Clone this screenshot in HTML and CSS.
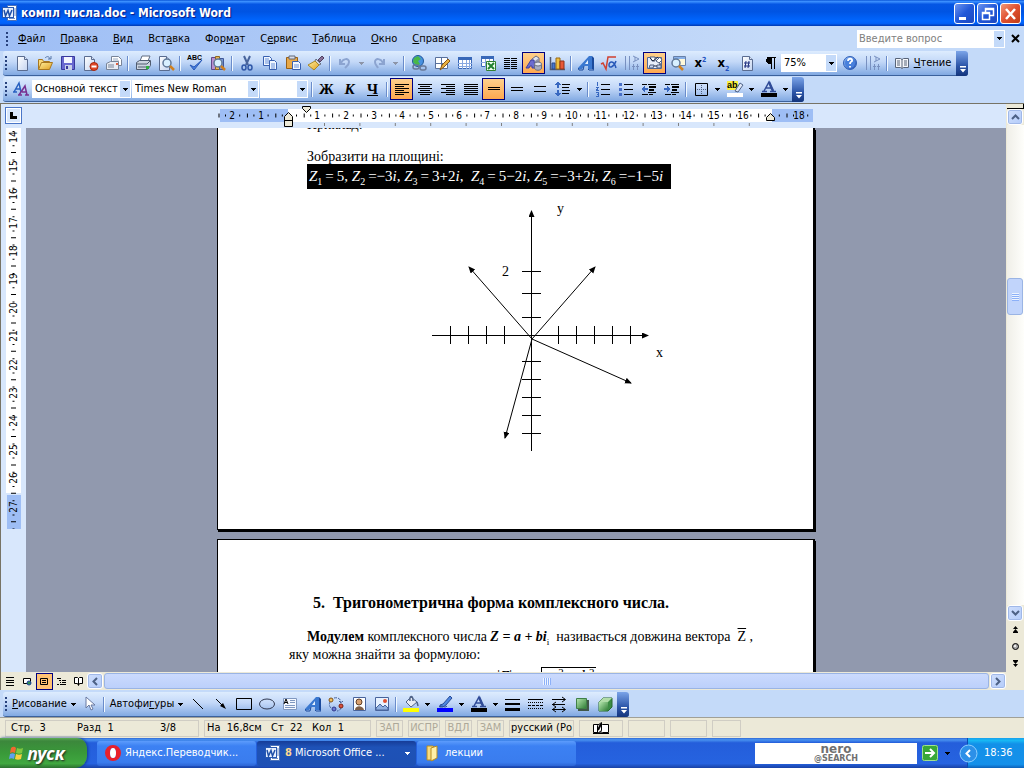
FILE: index.html
```html
<!DOCTYPE html>
<html lang="ru">
<head>
<meta charset="utf-8">
<title>компл числа.doc - Microsoft Word</title>
<link rel="stylesheet" href="styles.css">
</head>
<body>
<svg class="defs" aria-hidden="true">
  <defs>
    <linearGradient id="gBlue" x1="0" y1="0" x2="1" y2="1"><stop offset="0" stop-color="#9cc8ff"/><stop offset="1" stop-color="#1848b0"/></linearGradient>
    <linearGradient id="gGreen" x1="0" y1="0" x2="1" y2="1"><stop offset="0" stop-color="#b8e8b0"/><stop offset="1" stop-color="#2c7c34"/></linearGradient>
    <linearGradient id="gGold" x1="0" y1="0" x2="1" y2="1"><stop offset="0" stop-color="#fff0a0"/><stop offset="1" stop-color="#e0a020"/></linearGradient>
    <linearGradient id="gPaper" x1="0" y1="0" x2="1" y2="1"><stop offset="0" stop-color="#fff"/><stop offset="1" stop-color="#c4d4f0"/></linearGradient>
    <marker id="head" viewBox="0 0 7 7" refX="6" refY="3" markerWidth="7" markerHeight="7" markerUnits="userSpaceOnUse" orient="auto"><path d="M0 0L7 3L0 6Z"/></marker>
    <symbol id="i-page" viewBox="0 0 16 16"><path d="M3.500 1.500h7l3 3v11h-10z" fill="url(#gPaper)" stroke="#5a6c90"/><path d="M10.500 1.500v3h3" fill="#dce6f8" stroke="#5a6c90"/></symbol>
    <symbol id="i-art" viewBox="0 0 16 16"><path d="M0 13L11 1h3v13h-4v-3H6l-2 3H0z" fill="#3a78d0"/><path d="M7 9l3-4v4z" fill="#e8f2ff"/><path d="M14 1l2 2v12l-2-1z" fill="#1a4a9c"/><path d="M0 13l1 2h4l1-4M10 14l1 1h5" fill="none" stroke="#1a4a9c"/></symbol>
    <symbol id="i-down" viewBox="0 0 5 3"><path d="M0 0h5v1H4v1H3v1H2V2H1V1H0z"/></symbol>
    <symbol id="i-word" viewBox="0 0 16 16"><path d="M5.500 .500h9v15h-9z" fill="#fff" stroke="#4a70b8"/><path d="M11 4h3M11 6h3M11 8h3M11 10h3M7 13.500h6" stroke="#7090c8"/><rect x="0.500" y="2.500" width="11" height="10" fill="#e8f0ff" stroke="#2858b0"/><path d="M2 5l1.500 6L6 5.500l1.500 5.500L10 5" fill="none" stroke="#2050a8" stroke-width="1.500"/></symbol>
    <symbol id="i-textdir" viewBox="0 0 16 16"><path d="M1.500 1v14M5.500 1v14M9.500 9v6M13.500 9v6M8 11.500h3M12 11.500h3" fill="none" stroke="#7890c0"/><path d="M9 1l6 3-6 3M11 2v4" fill="none" stroke="#7890c0"/></symbol>
    <symbol id="i-lens" viewBox="0 0 16 16"><circle cx="8" cy="7" r="4" fill="#d8f0ff" stroke="#607898" stroke-width="1.500"/><path d="M11 10l4 4" stroke="#d08020" stroke-width="2.500"/></symbol>
  </defs>
</svg>

<div class="app">
  <header class="titlebar">
    <svg class="ic"><use href="#i-word"/></svg>
    <h1>компл числа.doc - Microsoft Word</h1>
    <div class="winbtns">
      <button aria-label="Свернуть"><svg class="w"><path d="M4 13h7v3H4z" fill="#fff"/></svg></button>
      <button aria-label="Восстановить"><svg class="w"><path d="M7.500 8V4.500h8v7H12M7 5.500h9" fill="none" stroke="#fff" stroke-width="1.500"/><path d="M4.500 8.500h7v7h-7zM4 9.500h8" fill="none" stroke="#fff" stroke-width="1.500"/></svg></button>
      <button class="close" aria-label="Закрыть"><svg class="w"><path d="M5 5l9 10M14 5L5 15" stroke="#fff" stroke-width="2.500"/></svg></button>
    </div>
  </header>

  <nav class="menubar">
    <i class="grip"></i>
    <button><u>Ф</u>айл</button><button><u>П</u>равка</button><button><u>В</u>ид</button><button>Вст<u>а</u>вка</button><button>Фор<u>м</u>ат</button><button>С<u>е</u>рвис</button><button><u>Т</u>аблица</button><button><u>О</u>кно</button><button><u>С</u>правка</button>
    <div class="ask"><input aria-label="Введите вопрос" placeholder="Введите вопрос"><button aria-label="Список вопросов"><svg class="dn"><use href="#i-down"/></svg></button></div>
    <button class="docclose" aria-label="Закрыть документ"><svg width="9" height="9"><path d="M1 1l7 7M8 1L1 8" stroke="#000" stroke-width="2"/></svg></button>
  </nav>

  <div class="barrow">
   <div class="toolbar">
    <i class="grip"></i>
    <button class="tb" aria-label="Создать"><svg class="ic"><use href="#i-page"/></svg></button>
    <button class="tb" aria-label="Открыть"><svg class="ic"><path d="M1.500 14V4.500h4l1 2h6V9" fill="#f8d878" stroke="#a87820"/><path d="M1.500 14.500l3-7h11l-3 7z" fill="url(#gGold)" stroke="#a87820"/><path d="M8 3c2-2 4-2 5 1M11 4h3V1" fill="none" stroke="#5878a8"/></svg></button>
    <button class="tb" aria-label="Сохранить"><svg class="ic"><path d="M1.500 1.500h13v13h-13z" fill="#6868d0" stroke="#38389c"/><path d="M4 2h8v6H4z" fill="#f4f6ff"/><path d="M5 10h7v5H5z" fill="#c8d0e8"/><path d="M6 11h2v3H6z" fill="#38389c"/></svg></button>
    <button class="tb" aria-label="Разрешения"><svg class="ic"><use href="#i-page" x="-2"/><circle cx="11" cy="11.500" r="4" fill="#e04828" stroke="#a82810"/><path d="M8.500 11.500h5" stroke="#fff" stroke-width="2"/></svg></button>
    <button class="tb" aria-label="Сообщение"><svg class="ic"><path d="M5.500 1.500h7l3 3v6h-10z" fill="#fff" stroke="#788498"/><path d="M7 4h5M7 6h6" stroke="#98a8c0"/><path d="M.500 8.500l4-2h8v8H.500z" fill="#e8ecf4" stroke="#788498"/><path d="M2 10h6M2 12h6" stroke="#788498"/><path d="M10 8h2v2h-2z" fill="#e06040"/></svg></button>
    <i class="sep"></i>
    <button class="tb" aria-label="Печать"><svg class="ic"><path d="M5 6l2-5h8l-2 5z" fill="#fff" stroke="#606c80"/><path d="M1.500 7.500l3-2h11v5l-3 4h-11z" fill="#ccd4e0" stroke="#505c70"/><path d="M2 9h10l3-3M3 12h8" fill="none" stroke="#505c70"/><path d="M11 11h3v3h-3z" fill="#30b040"/></svg></button>
    <button class="tb" aria-label="Просмотр"><svg class="ic"><use href="#i-page" x="-2"/><use href="#i-lens" x="1" y="1"/></svg></button>
    <i class="sep"></i>
    <button class="tb" aria-label="Орфография"><svg class="ic"><text x="0" y="5" class="abc">ABC</text><path d="M3 10l4 5 8-10-8 7z" fill="#4a80e0" stroke="#2858b8"/></svg></button>
    <button class="tb" aria-label="Справочные материалы"><svg class="ic"><path d="M1.500 2.500h4v12h-4z" fill="#b890d0" stroke="#604888"/><path d="M5.500 1.500h4v13h-4z" fill="#e8b858" stroke="#906820"/><path d="M9.500 3.500h4v11h-4z" fill="#7898d8" stroke="#405898"/><use href="#i-lens" y="1"/></svg></button>
    <i class="sep"></i>
    <button class="tb" aria-label="Вырезать"><svg class="ic"><path d="M5 1l4 9M11 1L7 10" stroke="#48649c" stroke-width="2"/><ellipse cx="5" cy="12.500" rx="2" ry="2.500" fill="none" stroke="#3058a8" stroke-width="1.500"/><ellipse cx="11" cy="12.500" rx="2" ry="2.500" fill="none" stroke="#3058a8" stroke-width="1.500"/></svg></button>
    <button class="tb" aria-label="Копировать"><svg class="ic"><path d="M1.500 1.500h6l2 2v7h-8z" fill="#f0f6ff" stroke="#3860b0"/><path d="M3 4h4M3 6h4M3 8h4" stroke="#6890d8"/><path d="M7.500 5.500h5l2 2v7h-7z" fill="#f0f6ff" stroke="#3860b0"/><path d="M9 9h4M9 11h4M9 13h4" stroke="#6890d8"/></svg></button>
    <button class="tb" aria-label="Вставить"><svg class="ic"><path d="M1.500 2.500h11v11h-11z" fill="#e8a848" stroke="#986018"/><path d="M4 1h6v3H4z" fill="#d8dce8" stroke="#606878"/><path d="M7.500 6.500h6l2 2v6h-8z" fill="#f4f8ff" stroke="#3860b0"/><path d="M9 10h5M9 12h5" stroke="#6890d8"/></svg></button>
    <button class="tb" aria-label="Формат по образцу"><svg class="ic"><path d="M10 5l4-4 2 2-4 4z" fill="#887098" stroke="#504060"/><path d="M8 4l5 5-2 1-4-4z" fill="#d0d4e0" stroke="#687080"/><path d="M7 6l4 4-5 5-6-5z" fill="url(#gGold)" stroke="#a88828"/></svg></button>
    <i class="sep"></i>
    <button class="tb" aria-label="Отменить"><svg class="ic"><path d="M3 4v5h5M4 8c2-5 8-5 8-1 0 3-2 4-4 6" fill="none" stroke="#8ca4d0" stroke-width="2"/></svg></button><button class="arr" aria-label="Список отмены"><svg class="dn off"><use href="#i-down"/></svg></button>
    <button class="tb" aria-label="Вернуть"><svg class="ic"><path d="M13 4v5H8M12 8C10 3 4 3 4 7c0 3 2 4 3 6" fill="none" stroke="#8ca4d0" stroke-width="2"/></svg></button><button class="arr" aria-label="Список возврата"><svg class="dn off"><use href="#i-down"/></svg></button>
    <i class="sep"></i>
    <button class="tb" aria-label="Гиперссылка"><svg class="ic"><circle cx="7" cy="6" r="5.500" fill="#4890e0" stroke="#205898"/><path d="M3 3l4-2 3 3-3 2 2 3-3 2-4-4z" fill="#48b848"/><rect x="2" y="10" width="6" height="4" rx="2" fill="none" stroke="#687898" stroke-width="1.500"/><rect x="9" y="11" width="6" height="4" rx="2" fill="none" stroke="#687898" stroke-width="1.500"/></svg></button>
    <button class="tb" aria-label="Таблицы и границы"><svg class="ic"><path d="M1.500 2.500h12v11h-12zM7.500 2v12M1 8.500h13" fill="#fff" stroke="#58709c"/><path d="M6 15l2-5 6-6 2 2-6 6z" fill="#e8b040" stroke="#885818"/></svg></button>
    <button class="tb" aria-label="Добавить таблицу"><svg class="ic"><path d="M1.500 2.500h13v11h-13z" fill="#fff" stroke="#3868b8"/><path d="M1 2h14v3H1z" fill="#3868b8"/><path d="M1 8.500h14M1 11.500h14M5.500 5v9M9.500 5v9M12.500 5v9" stroke="#88a8e0"/></svg></button>
    <button class="tb" aria-label="Таблица Excel"><svg class="ic"><path d="M1.500 1.500h12v10h-12z" fill="#fff" stroke="#3868b8"/><path d="M1 1h13v3H1z" fill="#3868b8"/><path d="M1 7.500h13M5.500 4v8M9.500 4v8" stroke="#88a8e0"/><path d="M6.500 6.500h9v9h-9z" fill="#f0fff0" stroke="#308030"/><path d="M8 8l6 6M14 8l-6 6" stroke="#208030" stroke-width="2"/></svg></button>
    <button class="tb" aria-label="Колонки"><svg class="ic crisp"><path d="M1 3h6v1H1zM1 5h6v1H1zM1 7h6v1H1zM1 9h6v1H1zM1 11h6v1H1zM1 13h6v1H1zM8 3h6v1H8zM8 5h6v1H8zM8 7h6v1H8zM8 9h6v1H8zM8 11h6v1H8zM8 13h6v1H8z"/></svg></button>
    <button class="tb on" aria-label="Рисование"><svg class="ic"><path d="M6 4l4-3 3 2v4l-4 3-3-2z" fill="#e0e4f0" stroke="#686c80"/><path d="M9 10V6l4-3v4z" fill="#9094a8"/><path d="M0 13L5 5h3l1 8H6v-2H4l-1 2z" fill="#6c6cd0" stroke="#4040a0"/><path d="M8.500 9v4c0 3 7 3 7 0V9z" fill="#a8acc0" stroke="#686c80"/><ellipse cx="12" cy="9" rx="3.500" ry="2" fill="#e4e6f0" stroke="#686c80"/></svg></button>
    <button class="tb" aria-label="Диаграмма"><svg class="ic"><path d="M1.500 2v12.500H16" fill="none" stroke="#505870" stroke-width="1.500"/><path d="M3 8h3v6H3z" fill="#4878d0" stroke="#284888"/><path d="M7 3h4v11H7z" fill="#f0c040" stroke="#986810"/><path d="M11 6h4v8h-4z" fill="#e85838" stroke="#903018"/></svg></button>
    <i class="sep"></i>
    <button class="tb" aria-label="WordArt"><svg class="ic"><use href="#i-art"/></svg></button>
    <button class="tb" aria-label="Формула"><svg class="ic"><path d="M0 9l2-1 3 6 2-12h8" fill="none" stroke="#d04030" stroke-width="1.500"/><path d="M15 6c-2 6-7 8-7 4s5-5 7 3" fill="none" stroke="#2858b8" stroke-width="1.500"/></svg></button>
    <button class="tb" aria-label="Направление текста"><svg class="ic"><use href="#i-textdir"/></svg></button>
    <button class="tb on" aria-label="Схема"><svg class="ic"><path d="M.500 2.500h14v11H.500z" fill="#e8eefa" stroke="#506898"/><path d="M3 2h5v4H5zM9 6l4-4 2 3-3 3z" fill="#fff" stroke="#506080"/><path d="M3 10h4l-1 3H2zM10 10h4v3h-4z" fill="#c8d4ee" stroke="#506080"/><path d="M3 3l3 3 5-4M13 8v2M7 11h3" fill="none" stroke="#202840"/></svg></button>
    <button class="tb" aria-label="Масштаб области"><svg class="ic"><path d="M3.500 1.500h12v9h-12z" fill="#fff8d8" stroke="#6880a8"/><path d="M4 2h11v2H4z" fill="#88b0e8"/><use href="#i-lens" x="-2" y="1"/></svg></button>
    <button class="tb glyph" aria-label="Надстрочный">x<sup>2</sup></button>
    <button class="tb glyph" aria-label="Подстрочный">x<sub>2</sub></button>
    <button class="tb" aria-label="Номер страницы"><svg class="ic"><use href="#i-page"/><path d="M7 6l-1 7M10 6l-1 7M5 8h6M5 11h6" stroke="#203080"/></svg></button>
    <button class="tb" aria-label="Непечатаемые знаки"><svg class="ic crisp"><path d="M5 2h9v1h-1v11h-1V3h-2v11H9V9H6V8H5V7H4V4h1z"/></svg></button>
    <div class="combo zoom"><select aria-label="Масштаб"><option>75%</option></select><span><svg class="dn"><use href="#i-down"/></svg></span></div>
    <button class="tb" aria-label="Справка"><svg class="ic"><circle cx="8" cy="8" r="6.500" fill="url(#gBlue)" stroke="#3060b8"/><circle cx="8" cy="8" r="5" fill="#4880dc"/><path d="M6 6c0-3 5-3 4 0-1 1-2 1-2 3M8 11v1.500" fill="none" stroke="#fff" stroke-width="1.800"/></svg></button>
    <button class="tb" aria-label="Вертикальный текст"><svg class="ic"><use href="#i-textdir"/></svg></button>
    <i class="sep"></i>
    <button class="label read"><svg class="ic"><path d="M1.500 3.500h5l1.500 1 1.500-1h5v9h-5l-1.500 1-1.500-1h-5z" fill="#f4f6fa" stroke="#586478"/><path d="M8 4v9M3 6h3M3 8h3M3 10h3M10 6h3M10 8h3M10 10h3" stroke="#586478"/></svg><span><u>Ч</u>тение</span></button>
    <button class="cap" aria-label="Параметры панели"><svg width="7" height="7"><path d="M1 0h6v1.500H1zM1 3h6L4 6.500z" fill="#fff"/></svg></button>
   </div>
  </div>

  <div class="barrow format">
   <div class="toolbar">
    <i class="grip"></i>
    <button class="tb" aria-label="Стили и форматирование"><svg class="ic"><path d="M1 11L6 2l2 9M3 8h4M0 11h4" fill="none" stroke="#2860c0" stroke-width="1.500"/><path d="M6 14l6-9 2 9M9 11h4M5 14h4M12 14h4" fill="none" stroke="#783090" stroke-width="1.500"/></svg></button>
    <div class="combo style"><select aria-label="Стиль"><option>Основной текст</option></select><span><svg class="dn"><use href="#i-down"/></svg></span></div>
    <div class="combo font"><select aria-label="Шрифт"><option>Times New Roman</option></select><span><svg class="dn"><use href="#i-down"/></svg></span></div>
    <div class="combo size"><select aria-label="Размер"><option></option></select><span><svg class="dn"><use href="#i-down"/></svg></span></div>
    <i class="sep"></i>
    <button class="tb fmt">Ж</button><button class="tb fmt it">К</button><button class="tb fmt un">Ч</button>
    <i class="sep"></i>
    <button class="tb on" aria-label="По левому краю"><svg class="ic crisp"><path d="M1 3h14v1H1zM1 5h9v1H1zM1 7h14v1H1zM1 9h9v1H1zM1 11h14v1H1zM1 13h9v1H1z"/></svg></button>
    <button class="tb" aria-label="По центру"><svg class="ic crisp"><path d="M1 3h14v1H1zM3 5h10v1H3zM1 7h14v1H1zM3 9h10v1H3zM1 11h14v1H1zM3 13h10v1H3z"/></svg></button>
    <button class="tb" aria-label="По правому краю"><svg class="ic crisp"><path d="M1 3h14v1H1zM6 5h9v1H6zM1 7h14v1H1zM6 9h9v1H6zM1 11h14v1H1zM6 13h9v1H6z"/></svg></button>
    <button class="tb" aria-label="По ширине"><svg class="ic crisp"><path d="M1 3h14v1H1zM1 5h14v1H1zM1 7h14v1H1zM1 9h14v1H1zM1 11h14v1H1zM1 13h14v1H1z"/></svg></button>
    <button class="tb on" aria-label="Интервал одинарный"><svg class="ic crisp"><path d="M2 6h12v1H2zM2 8h12v1H2z"/></svg></button>
    <button class="tb" aria-label="Интервал полуторный"><svg class="ic crisp"><path d="M2 6h12v1H2zM2 9h12v1H2z"/></svg></button>
    <button class="tb" aria-label="Интервал двойной"><svg class="ic crisp"><path d="M2 5h12v1H2zM2 10h12v1H2z"/></svg></button>
    <button class="tb" aria-label="Междустрочный интервал"><svg class="ic crisp"><path d="M3 0l3 4H4v3H2V4H0zM2 9h2v3h2l-3 4-3-4h2z" fill="#3868c0"/><path d="M7 3h8v1H7zM7 6h7v1H7zM7 9h8v1H7zM7 12h7v1H7z"/></svg></button><button class="arr" aria-label="Список интервалов"><svg class="dn"><use href="#i-down"/></svg></button>
    <i class="sep"></i>
    <button class="tb" aria-label="Нумерация"><svg class="ic crisp"><path d="M2 1h1v4H2zM1 6h3v1H3v2h1v1H1V8h1V7H1zM1 11h3v5H1v-1h2v-1H2v-1h1v-1H1z" fill="#3868c0"/><path d="M6 3h9v1H6zM6 8h9v1H6zM6 13h9v1H6z"/></svg></button>
    <button class="tb" aria-label="Маркеры"><svg class="ic"><path d="M1 2h3v3H1zM1 7h3v3H1zM1 12h3v3H1z" fill="#4870c8"/><path d="M6 3.500h9M6 8.500h9M6 13.500h9" stroke="#000"/></svg></button>
    <button class="tb" aria-label="Уменьшить отступ"><svg class="ic crisp"><path d="M0 8l4-3v2h3v2H4v2z" fill="#3868c0"/><path d="M1 3h5v1H1zM7 3h8v1H7zM8 5h7v2H8zM8 8h5v2H8zM7 11h8v1H7zM1 13h6v1H1zM8 13h4v1H8z"/></svg></button>
    <button class="tb" aria-label="Увеличить отступ"><svg class="ic crisp"><path d="M7 8L3 5v2H0v2h3v2z" fill="#3868c0"/><path d="M1 3h5v1H1zM7 3h8v1H7zM8 5h7v2H8zM8 8h5v2H8zM7 11h8v1H7zM1 13h6v1H1zM8 13h4v1H8z"/></svg></button>
    <i class="sep"></i>
    <button class="tb" aria-label="Границы"><svg class="ic"><path d="M2.500 2.500h12v12h-12z" fill="none" stroke="#000"/><path d="M8.500 4v10M4 8.500h10" stroke="#506080" stroke-dasharray="1 1"/></svg></button><button class="arr" aria-label="Виды границ"><svg class="dn"><use href="#i-down"/></svg></button>
    <button class="tb" aria-label="Выделение цветом"><svg class="ic"><path d="M0 0h11v9H0z" fill="#f8f040"/><text x="0" y="7" class="ab">ab</text><path d="M8 10l5-8 3 2-5 7z" fill="#e0e8f8" stroke="#506488"/><path d="M0 12h16v4H0z" fill="#fff"/></svg></button><button class="arr" aria-label="Цвета выделения"><svg class="dn"><use href="#i-down"/></svg></button>
    <button class="tb" aria-label="Цвет шрифта"><svg class="ic"><path d="M3 10L8 1l4 9M5 7h6M1 10.500h5M9 10.500h6" fill="none" stroke="#304c98" stroke-width="1.500"/><path d="M8 1l4 9" stroke="#304c98" stroke-width="2.500"/><path d="M0 12h16v4H0z"/></svg></button><button class="arr" aria-label="Цвета шрифта"><svg class="dn"><use href="#i-down"/></svg></button>
    <button class="cap" aria-label="Параметры форматирования"><svg width="7" height="7"><path d="M1 0h6v1.500H1zM1 3h6L4 6.500z" fill="#fff"/></svg></button>
   </div>
  </div>

  <main class="work">
    <div class="rulerrow">
      <button class="tabsel" aria-label="Позиция табуляции"><svg width="7" height="7"><path d="M0 0h3v4h4v3H0z"/></svg></button>
      <div class="hruler">
        <svg width="598" height="24">
          <rect x="2" y="5" width="68" height="13" fill="#9ebef5"/><rect x="70" y="5" width="484" height="13" fill="#fff"/><rect x="554" y="5" width="41" height="13" fill="#9ebef5"/>
          <path d="M0.500 11.500H590" stroke="#000" stroke-width="4" stroke-dasharray="1 27.400"/>
          <path d="M7 11.500H595" stroke="#000" stroke-width="2" stroke-dasharray="1 13.200"/>
          <g class="rnum"><text x="14" y="15">2</text><text x="43" y="15">1</text><text x="99" y="15">1</text><text x="128" y="15">2</text><text x="156" y="15">3</text><text x="184" y="15">4</text><text x="213" y="15">5</text><text x="241" y="15">6</text><text x="269" y="15">7</text><text x="298" y="15">8</text><text x="326" y="15">9</text><text x="354" y="15">10</text><text x="383" y="15">11</text><text x="411" y="15">12</text><text x="439" y="15">13</text><text x="468" y="15">14</text><text x="496" y="15">15</text><text x="525" y="15">16</text><text x="581" y="15">18</text></g>
          <path d="M106 20.500H550" stroke="#808080" stroke-width="3" stroke-dasharray="1 34.400"/>
          <g fill="#ece9d8" stroke="#000"><path d="M84.500 2.500h8v2l-4 4-4-4z"/><path d="M66.500 22.500v-10l4-4 4 4v10zM66.500 16.500h8"/><path d="M548.500 16.500v-3l4-4 4 4v3z"/></g>
        </svg>
      </div>
    </div>
    <div class="docrow">
      <div class="vruler">
        <svg width="15" height="401">
          <rect width="15" height="365" fill="#fff"/><rect x="1" y="367" width="14" height="34" fill="#9ebef5"/>
          <path d="M7.500 24V401" stroke="#000" stroke-width="5" stroke-dasharray="1 27.400"/>
          <path d="M7.500 3V401" stroke="#000" stroke-width="2" stroke-dasharray="1 13.200"/>
          <g class="rnum"><text transform="translate(11 9) rotate(-90)">14</text><text transform="translate(11 38) rotate(-90)">15</text><text transform="translate(11 66) rotate(-90)">16</text><text transform="translate(11 95) rotate(-90)">17</text><text transform="translate(11 123) rotate(-90)">18</text><text transform="translate(11 151) rotate(-90)">19</text><text transform="translate(11 180) rotate(-90)">20</text><text transform="translate(11 208) rotate(-90)">21</text><text transform="translate(11 237) rotate(-90)">22</text><text transform="translate(11 265) rotate(-90)">23</text><text transform="translate(11 293) rotate(-90)">24</text><text transform="translate(11 322) rotate(-90)">25</text><text transform="translate(11 350) rotate(-90)">26</text><text transform="translate(11 379) rotate(-90)">27</text></g>
        </svg>
      </div>
      <div class="canvas">
        <article class="page first">
          <p class="ex">Приклад:</p>
          <p class="draw">Зобразити на площині:</p>
          <p class="formula"><i>Z</i><sub>1</sub>&thinsp;=&thinsp;5, <i>Z</i><sub>2</sub>&thinsp;=−3<i>i</i>, <i>Z</i><sub>3</sub>&thinsp;=&thinsp;3+2<i>i</i>, &nbsp;<i>Z</i><sub>4</sub>&thinsp;=&thinsp;5−2<i>i</i>, <i>Z</i><sub>5</sub>&thinsp;=−3+2<i>i</i>, <i>Z</i><sub>6</sub>&thinsp;=−1−5<i>i</i></p>
          <svg class="plot" width="260" height="262" role="img" aria-label="Вектори на комплексній площині">
            <g stroke="#000" fill="none">
              <path d="M111.500 253V13" marker-end="url(#head)"/><path d="M12 137.500H228" marker-end="url(#head)"/>
              <path d="M30.500 128v18M48.500 128v18M66.500 128v18M84.500 128v18M138.500 128v18M156.500 128v18M174.500 128v18M192.500 128v18M210.500 128v18M102 73.500h19M102 95.500h19M102 119.500h19M102 163.500h19M102 181.500h19M102 199.500h19M102 217.500h19M102 235.500h19"/>
              <path d="M112 141L49 69" marker-end="url(#head)"/><path d="M112 141L175 69" marker-end="url(#head)"/><path d="M112 141L211 185" marker-end="url(#head)"/><path d="M112 141L85 240" marker-end="url(#head)"/>
            </g>
            <text x="137" y="15">y</text><text x="82" y="78">2</text><text x="236" y="159">x</text>
          </svg>
        </article>
        <article class="page second">
          <h2>5.&nbsp; Тригонометрична форма комплексного числа.</h2>
          <p class="body"><b>Модулем</b> комплексного числа <b><i>Z = a + bi</i></b><sub>і</sub> &nbsp;називається довжина вектора &nbsp;<span class="vec">Z</span> ,<br>яку можна знайти за формулою:</p>
          <p class="modulus">|<i>Z</i>|&nbsp; = &nbsp;&nbsp;<span class="root"><i>a</i><sup>2</sup> + <i>b</i><sup>2</sup></span></p>
        </article>
      </div>
      <div class="vscroll">
        <i class="split"></i>
        <button class="sb" aria-label="Вверх"><svg width="9" height="6"><path d="M1 5l3.500-3.500L8 5" fill="none" stroke="#4d6185" stroke-width="2"/></svg></button>
        <div class="track"><i class="thumb"></i></div>
        <button class="sb" aria-label="Вниз"><svg width="9" height="6"><path d="M1 1l3.500 3.500L8 1" fill="none" stroke="#4d6185" stroke-width="2"/></svg></button>
        <button class="browse" aria-label="Предыдущая страница"><svg width="7" height="8"><path d="M3.500 0L6 3H1zM3.500 3L6 6H1zM1 6h5v1H1z"/></svg></button>
        <button class="browse" aria-label="Выбор объекта"><svg width="7" height="7"><circle cx="3.500" cy="3.500" r="3" fill="#aaa" stroke="#000"/><circle cx="3" cy="3" r="1" fill="#fff"/></svg></button>
        <button class="browse" aria-label="Следующая страница"><svg width="7" height="8"><path d="M1 0h5v1H1zM1 1h5L3.500 4zM1 4h5L3.500 7z"/></svg></button>
      </div>
    </div>
    <div class="hrow">
      <button class="view" aria-label="Обычный"><svg width="9" height="9"><path d="M0 .500h8M0 3.500h8M0 5.500h8M0 8.500h8" stroke="#000"/></svg></button>
      <button class="view" aria-label="Веб-документ"><svg width="9" height="9"><path d="M.500 1.500h7v5h-7z" fill="#fff" stroke="#000"/><circle cx="6" cy="6" r="2" fill="#309050" stroke="#2040a0"/></svg></button>
      <button class="view on" aria-label="Разметка"><svg width="9" height="9"><path d="M.500 1.500h7v6h-7zM2 3.500h4M2 5.500h4" fill="none" stroke="#000"/></svg></button>
      <button class="view" aria-label="Структура"><svg width="9" height="9"><path d="M0 1.500h4M2 3.500h2M5 3.500h4M3 5.500h1M5 5.500h4M0 7.500h2M3 7.500h6" stroke="#000"/></svg></button>
      <button class="view" aria-label="Чтение"><svg width="9" height="9"><path d="M.500.500h3l1 1 1-1h3v6h-3l-1 2-1-2h-3zM4.500 1v7" fill="#fff" stroke="#000"/></svg></button>
      <button class="sb" aria-label="Влево"><svg width="6" height="9"><path d="M5 1L1.500 4.500 5 8" fill="none" stroke="#4d6185" stroke-width="2"/></svg></button>
      <div class="htrack"><i></i></div>
      <button class="sb" aria-label="Вправо"><svg width="6" height="9"><path d="M1 1l3.500 3.500L1 8" fill="none" stroke="#4d6185" stroke-width="2"/></svg></button>
    </div>
  </main>

  <div class="barrow drawrow">
   <div class="toolbar">
    <i class="grip"></i>
    <button class="label draw-menu"><span><u>Р</u>исование</span><svg class="dn"><use href="#i-down"/></svg></button>
    <button class="tb" aria-label="Выбор объектов"><svg class="ic"><path d="M4 1v11l3-3 2 5 2-1-2-4h4z" fill="#fff" stroke="#6878a0"/></svg></button>
    <i class="sep"></i>
    <button class="label shapes"><span>Автофи<u>г</u>уры</span><svg class="dn"><use href="#i-down"/></svg></button>
    <button class="tb" aria-label="Линия"><svg class="ic"><path d="M3 3l10 10" stroke="#000"/></svg></button>
    <button class="tb" aria-label="Стрелка"><svg class="ic"><path d="M3 3l6 6" stroke="#000"/><path d="M7 10l3-3 3 6z"/></svg></button>
    <button class="tb" aria-label="Прямоугольник"><svg class="ic"><path d="M.500 2.500h15v11H.500z" fill="none" stroke="#000"/></svg></button>
    <button class="tb" aria-label="Овал"><svg class="ic"><ellipse cx="8" cy="8" rx="7.500" ry="5" fill="none" stroke="#303850"/></svg></button>
    <button class="tb" aria-label="Надпись"><svg class="ic"><path d="M1.500 2.500h13v11h-13z" fill="#f4f8ff" stroke="#8098c0"/><path d="M2 8l2-5 2 5M3 6.500h2" fill="none" stroke="#000"/><path d="M8 4.500h5M8 6.500h5M3 9.500h10M3 11.500h10" stroke="#8098c0"/></svg></button>
    <button class="tb" aria-label="Добавить WordArt"><svg class="ic"><use href="#i-art"/></svg></button>
    <button class="tb" aria-label="Организационная диаграмма"><svg class="ic"><path d="M6 2c4-1 7 1 7 5M13 12c-1 2-2 3-4 3M3 12c-2-2-2-4-1-6M11 5l2 2 2-2" fill="none" stroke="#48649c" stroke-dasharray="3 1"/><circle cx="3" cy="4" r="2" fill="#f0c060" stroke="#805010"/><circle cx="13" cy="10" r="2" fill="#d85040" stroke="#802010"/><circle cx="6" cy="13" r="2" fill="#6878d8" stroke="#303888"/></svg></button>
    <button class="tb" aria-label="Клип"><svg class="ic"><path d="M2.500 1.500h12v13h-12z" fill="#fff" stroke="#48649c"/><circle cx="8" cy="6" r="3" fill="#d8a070" stroke="#604028"/><path d="M4 14c0-5 8-5 9 0z" fill="#806048"/></svg></button>
    <button class="tb" aria-label="Рисунок"><svg class="ic"><path d="M1.500 1.500h13v13h-13z" fill="#e8f2ff" stroke="#48649c"/><path d="M2 12l4-4 3 3 2-2 3 3v2H2z" fill="#90b0e0" stroke="#48649c"/><circle cx="11" cy="5" r="2" fill="#e05030"/></svg></button>
    <i class="sep"></i>
    <button class="tb" aria-label="Цвет заливки"><svg class="ic"><path d="M3 6l5-5 6 5-6 5z" fill="#e8ecf4" stroke="#506488"/><path d="M7 5c-1-6 3-6 3 0M14 6l1 4" fill="none" stroke="#506488" stroke-width="1.500"/><path d="M0 12h16v4H0z" fill="#ff0"/></svg></button><button class="arr" aria-label="Цвета заливки"><svg class="dn"><use href="#i-down"/></svg></button>
    <button class="tb" aria-label="Цвет линий"><svg class="ic"><path d="M3 9l3-1 7-8 2 2-6 7-3 2H3z" fill="#5088e0" stroke="#284c98"/><path d="M2 11c4-3 5 2 8-1" stroke="#284c98" fill="none"/><path d="M0 12h16v4H0z" fill="#00f"/></svg></button><button class="arr" aria-label="Цвета линий"><svg class="dn"><use href="#i-down"/></svg></button>
    <button class="tb" aria-label="Цвет текста"><svg class="ic"><path d="M3 10L8 1l4 9M5 7h6M1 10.500h5M9 10.500h6" fill="none" stroke="#304c98" stroke-width="1.500"/><path d="M8 1l4 9" stroke="#304c98" stroke-width="2.500"/><path d="M0 12h16v4H0z"/></svg></button><button class="arr" aria-label="Цвета текста"><svg class="dn"><use href="#i-down"/></svg></button>
    <button class="tb" aria-label="Тип линии"><svg class="ic crisp"><path d="M0 3h15v1H0zM0 7h15v2H0zM0 12h15v3H0z"/></svg></button>
    <button class="tb" aria-label="Тип штриха"><svg class="ic"><path d="M0 3.500h15" stroke="#000"/><path d="M0 6.500h15M0 12.500h15" stroke="#000" stroke-dasharray="1 1"/><path d="M0 9.500h15" stroke="#000" stroke-dasharray="3 1"/></svg></button>
    <button class="tb" aria-label="Вид стрелки"><svg class="ic"><path d="M1 3.500h13M1 8.500h13M1 13.500h13M11 1l3.500 2.500L11 6M5 6L1.500 8.500 5 11M11 11l3.500 2.500L11 16M5 11l-3.500 2.500L5 16" fill="none" stroke="#000"/></svg></button>
    <button class="tb" aria-label="Тень"><svg class="ic"><path d="M4 4h11v11H4z" fill="#405848"/><path d="M2.500 2.500h10v10h-10z" fill="url(#gGreen)" stroke="#408048"/></svg></button>
    <button class="tb" aria-label="Объем"><svg class="ic"><path d="M2 6l4-4h9v9l-4 4H2z" fill="#3c8c44" stroke="#286830"/><path d="M2 6h9v9H2z" fill="url(#gGreen)"/><path d="M2 6l4-4h9l-4 4z" fill="#b0dca8"/></svg></button>
    <button class="cap" aria-label="Параметры рисования"><svg width="7" height="7"><path d="M1 0h6v1.500H1zM1 3h6L4 6.500z" fill="#fff"/></svg></button>
   </div>
  </div>

  <footer class="status">
    <div class="cell pg"><span>Стр.&nbsp; 3</span><span>Разд&nbsp; 1</span><span>3/8</span></div>
    <div class="cell pos"><span>На&nbsp; 16,8см</span><span>Ст&nbsp; 22</span><span>Кол&nbsp; 1</span></div>
    <div class="cell c1 off">ЗАП</div><div class="cell c2 off">ИСПР</div><div class="cell c1 off">ВДЛ</div><div class="cell c1 off">ЗАМ</div>
    <div class="cell lang">русский (Ро</div>
    <div class="cell book"><svg width="18" height="13"><path d="M1.500 2.500h6l1.500 1 1.500-1h6v8h-6l-1.500 1-1.500-1h-6z" fill="#fff" stroke="#000"/><path d="M1 11.500h16M9 3v8" stroke="#000"/><path d="M5.500 3.500l4-3v8l-4 3z" fill="#fff" stroke="#000"/><path d="M6 8l3-6" stroke="#000" stroke-width="2"/></svg></div>
    <div class="cell c3"></div><div class="cell c3"></div><div class="cell c4"></div>
  </footer>

  <div class="taskbar">
    <button class="start"><svg width="18" height="18"><path d="M3 4c2-2 4-1 5 0L7 9c-2-1-3-1-5 0z" fill="#f06830"/><path d="M9 4c2 1 4 1 6 0l-1 5c-2 1-4 1-6 0z" fill="#80c840"/><path d="M2 10c2-1 3-1 5 0l-1 5c-2-1-3-1-5 0z" fill="#60a0f0"/><path d="M8 10c2 1 4 1 6 0l-1 5c-2 1-4 1-6 0z" fill="#f8d040"/></svg>пуск</button>
    <div class="tasks">
      <button><svg class="ic"><path fill-rule="evenodd" d="M8 0a8 8 0 1 0 0 16A8 8 0 1 0 8 0zM8 3c2 0 3 2 3 5s-1 5-3 5-3-2-3-5 1-5 3-5z" fill="#e8202c"/><path d="M8 3c2 0 3 2 3 5s-1 5-3 5-3-2-3-5 1-5 3-5z" fill="#fff"/></svg><span>Яндекс.Переводчик...</span></button>
      <button class="active"><svg class="ic"><use href="#i-word"/></svg><span><b>8</b> Microsoft Office ...</span><svg class="dn light"><use href="#i-down"/></svg></button>
      <button><svg class="ic"><path d="M2 1h6l1 1v13H2z" fill="#f8dc80" stroke="#b88c20"/><path d="M6 3l6-2v12l-6 3z" fill="#fff0a8" stroke="#b88c20"/></svg><span>лекции</span></button>
    </div>
    <button class="nero" aria-label="nero @SEARCH"><span class="n1">nero</span><span class="n2">@SEARCH</span></button>
    <button class="go" aria-label="Искать"><svg class="ic"><rect width="16" height="16" rx="2" fill="#38a838"/><rect x=".500" y=".500" width="15" height="15" rx="2" fill="none" stroke="#a0e090"/><path d="M3 8h9M8 4l4 4-4 4" fill="none" stroke="#fff" stroke-width="2"/></svg></button>
    <button class="arr" aria-label="Список поиска"><svg class="dn"><use href="#i-down"/></svg></button>
    <div class="tray"><button aria-label="Показать значки"><svg width="19" height="19"><circle cx="9.500" cy="9.500" r="8.500" fill="#2c90e8" stroke="#90d0ff"/><path d="M11 6L7.500 9.500 11 13" fill="none" stroke="#fff" stroke-width="2"/></svg></button><time>18:36</time></div>
  </div>
</div>
</body>
</html>
```
FILE: styles.css
```css
* { box-sizing: border-box; }
body { margin: 0; font: 11px/14px "DejaVu Sans Condensed", "Noto Sans", sans-serif; color: #000; }
button { border: 0; padding: 0; margin: 0; background: none; font: inherit; color: inherit; white-space: nowrap; }
button, .cell { display: flex; align-items: center; justify-content: center; }
svg { display: block; flex: none; }
p, h1, h2 { margin: 0; }
.defs { position: absolute; width: 0; height: 0; }
.ic { width: 16px; height: 16px; overflow: visible; }
.dn { width: 5px; height: 3px; }
.dn.off { fill: #8d95a8; }
.dn.light { fill: #fff; }
.crisp { shape-rendering: crispEdges; }
.app { height: 100vh; display: flex; flex-direction: column; background: #c4daf9; overflow: hidden; }

.titlebar { flex: none; height: 26px; display: flex; align-items: center; padding: 0 3px 0 2px; gap: 3px; color: #fff;
  background: linear-gradient(#0a56d8 0, #3c90ff 6%, #0556e4 16%, #0054e3 45%, #0066ff 80%, #0060f8 90%, #0038b0 100%); }
.titlebar h1 { flex: 1; font: bold 12px/16px "DejaVu Sans Condensed", "Noto Sans", sans-serif; text-shadow: 1px 1px 1px #0a1883; white-space: nowrap; }
.winbtns { display: flex; gap: 2px; }
.winbtns button { width: 21px; height: 21px; border: 1px solid #fff; border-radius: 3px; background: linear-gradient(135deg, #6c94f0, #2258d8 50%, #1c48c0); }
.winbtns .close { background: linear-gradient(135deg, #f09878, #e05030 50%, #c03c18); }
.w { width: 19px; height: 19px; }

.menubar { flex: none; height: 25px; display: flex; align-items: center; gap: 1px; padding: 0 4px; background: linear-gradient(90deg, #9ebef5, #c4daf9 75%); }
.menubar > button { padding: 0 7px; height: 20px; }
.grip { flex: none; width: 7px; height: 14px; background: repeating-linear-gradient(#27417c 0 2px, transparent 2px 4px) 2px 0 / 2px 14px no-repeat; }
.menubar .grip { width: 6px; }
.menubar .ask { margin-left: auto; display: flex; width: 148px; height: 18px; background: #fff; }
.ask input { flex: 1; min-width: 0; border: 0; padding: 0 2px; background: none; font: inherit; }
.ask input::placeholder { color: #808080; opacity: 1; }
.ask button { width: 12px; background: #c4daf9; border: 1px solid #fff; }
.menubar .docclose { padding: 0 0 0 5px; }

.barrow { flex: none; height: 26px; display: flex; background: #c4daf9; }
.format { height: 25px; }
.toolbar { flex: none; height: 25px; margin-left: 3px; display: flex; align-items: center; border-bottom: 1px solid #3b619c; border-radius: 3px; background: linear-gradient(#ddecfe, #c3d8f8 45%, #81a9e2); }
.format .grip { width: 6px; }
.tb { flex: none; width: 23px; height: 22px; }
.tb.on { border: 1px solid #000080; background: linear-gradient(#fed08c, #ffa850); }
.arr { flex: none; width: 11px; height: 22px; }
.sep { flex: none; width: 6px; height: 15px; background: linear-gradient(90deg, #6a8ccb 50%, #f1f9ff 50%) 2px 0 / 2px 15px no-repeat; }
.label { flex: none; height: 22px; gap: 4px; }
.read { width: 65px; }
.draw-menu { width: 68px; }
.shapes { width: 79px; }
.cap { flex: none; width: 12px; height: 25px; margin-left: 1px; align-items: flex-end; padding-bottom: 3px; border-radius: 0 3px 3px 0; background: linear-gradient(#7ba4e8, #2c55a8 60%, #14357c); }
.abc { font: bold 7px "Liberation Sans", sans-serif; }
.ab { font: bold 9px "Liberation Sans", sans-serif; }
.glyph { display: block; font-weight: bold; font-size: 13px; line-height: 20px; }
.glyph sup, .glyph sub { font-size: 7px; line-height: 0; color: #2050c0; }
.fmt { font: bold 15px/20px "Liberation Serif", serif; }
.it { font-style: italic; }
.un { text-decoration: underline; }
.combo { flex: none; display: grid; height: 18px; margin-right: 1px; background: #fff; }
.combo > * { grid-area: 1 / 1; }
.combo select { appearance: none; width: 100%; border: 0; padding: 0 12px 0 3px; background: none; font: inherit; color: #000; }
.combo span { justify-self: end; width: 12px; display: flex; align-items: center; justify-content: center; pointer-events: none; background: #c4daf9; border: 1px solid #fff; }
.style { width: 99px; }
.font { width: 127px; }
.size { width: 48px; }
.zoom { width: 56px; }

.work { flex: 1; min-height: 0; margin-top: 1px; display: flex; flex-direction: column; border: 1px solid #777365; border-width: 1px 0 0 1px; background: #d8e7fc; }
.rulerrow { flex: none; height: 24px; display: flex; }
.tabsel { width: 17px; height: 17px; margin: 3px 0 0 4px; border: 1px solid #4a76c8; background: #d8e7fc; outline: 1px solid #fff; outline-offset: -2px; }
.hruler { flex: 1; display: flex; justify-content: center; margin: 0 16px 0 4px; }
.docrow { flex: 1; min-height: 0; display: flex; }
.vruler { flex: none; width: 25px; padding-left: 5px; }
.canvas { flex: 1; min-width: 0; background: #9199ae; overflow: hidden; }
.page { display: flow-root; width: 598px; margin: 0 auto; background: #fff; border: 1px solid #000; border-right-width: 2px; box-shadow: 1px 2px #000; font: 14px/18px "Liberation Serif", serif; }
.first { height: 402px; border-top: 0; padding-left: 89px; }
.second { height: 300px; margin-top: 9px; padding: 54px 0 0 71px; }
.ex { margin-top: -12px; line-height: 18px; }
.draw { margin-top: 16px; line-height: 14px; }
.formula { width: fit-content; height: 25px; padding: 0 8px 0 2px; background: #000; color: #fff; font-size: 15px; line-height: 24px; white-space: nowrap; }
.formula sub { font-size: 10px; line-height: 0; }
.plot { margin: 9px 0 0 113px; font-size: 14px; }
.second h2 { padding-left: 24px; font-size: 16px; line-height: 18px; }
.body { margin-top: 16px; text-indent: 18px; white-space: nowrap; }
.body sub { font-size: 9px; line-height: 0; }
.vec { text-decoration: overline; }
.modulus { margin-top: 4px; padding-left: 208px; font-size: 16px; }
.modulus sup { font-size: 11px; line-height: 0; }
.modulus .root { border: solid #000; border-width: 1px 0 0 1px; padding: 0 2px 0 8px; }
.rnum { font: 10px "DejaVu Sans Condensed", "Noto Sans", sans-serif; text-anchor: middle; }

.vscroll { flex: none; width: 18px; margin-top: -24px; display: flex; flex-direction: column; align-items: center; background: #ece9d8; }
.split { width: 17px; height: 5px; border: 1px solid #000; border-width: 0 1px 1px 0; background: #ece9d8; }
.sb { flex: none; width: 16px; height: 16px; border: 1px solid #fff; border-radius: 3px; background: linear-gradient(135deg, #d0dffc, #b4ccfa); box-shadow: 0 0 0 1px #a0b8e8 inset; }
.track { flex: 1; width: 17px; padding-top: 153px; display: flex; flex-direction: column; background: linear-gradient(90deg, #f0efe8, #fefefb); }
.thumb { height: 37px; width: 16px; border: 1px solid #9ab4e4; border-radius: 3px; background: repeating-linear-gradient(#eef4fe 0 1px, #8cb0f8 1px 2px) 4px 14px / 7px 8px no-repeat, #c1d4fb; }
.browse { height: 17px; }
.hrow { flex: none; height: 18px; display: flex; align-items: center; padding: 0 18px 0 1px; background: #ece9d8; }
.view { flex: none; width: 17px; height: 17px; }
.view.on { border: 1px solid #000080; background: #ffc374; }
.htrack { flex: 1; height: 16px; margin: 0 1px; display: flex; align-items: center; justify-content: center; border: 1px solid #9ab4e4; border-radius: 3px; background: linear-gradient(#cbdafd, #bcd0fb); }
.htrack i { width: 8px; height: 7px; background: repeating-linear-gradient(90deg, #eef4fe 0 1px, #8cb0f8 1px 2px); }

.drawrow { height: 28px; padding-top: 2px; border-bottom: 1px solid #a0a098; }
.status { flex: none; height: 20px; display: flex; align-items: center; gap: 5px; padding: 2px 5px; background: #ece9d8; }
.cell { flex: none; height: 17px; border: 1px solid #d0cdc4; white-space: pre; }
.cell.off { color: #aca899; }
.pg { width: 194px; justify-content: flex-start; padding: 0 22px 0 5px; }
.pg span:first-child { width: 66px; }
.pg span:last-child { margin-left: auto; }
.pos { width: 167px; justify-content: space-between; padding: 0 26px 0 2px; }
.c1 { width: 27px; }
.c2 { width: 32px; }
.c3 { width: 37px; }
.c4 { width: 29px; }
.lang { width: 65px; }
.book { width: 44px; }

.taskbar { flex: none; height: 30px; display: flex; align-items: center; color: #fff; background: linear-gradient(#3168d5 0, #4993f0 6%, #245edb 16%, #2663e0 85%, #1941a5 100%); }
.start { width: 87px; height: 30px; padding-right: 14px; gap: 1px; border-radius: 0 10px 12px 0; font: italic bold 18px/24px "Noto Sans", sans-serif; text-shadow: 1px 1px 2px #222; background: linear-gradient(#5eac56 0, #3c873c 10%, #399939 50%, #40a840 85%, #2c7030 100%); box-shadow: 1px 0 3px #103c90; }
.tasks { flex: 1; min-width: 0; display: flex; gap: 1px; padding-left: 10px; align-self: stretch; align-items: center; }
.tasks button { flex: 0 1 159px; min-width: 0; height: 25px; justify-content: flex-start; gap: 4px; padding: 0 6px 0 8px; border-radius: 3px; background: linear-gradient(#5c9cfc, #3c81f3 20%, #3a7cee 85%, #2c64d4); }
.tasks .active { background: linear-gradient(#163c98, #1e52b7 25%, #1e50b4); }
.tasks .dn { margin-left: auto; }
.tasks b { color: #ffd890; }
.nero { width: 162px; height: 21px; margin-right: 5px; flex-direction: column; color: #707070; background: #fff; }
.n1 { font: bold 12px/11px "DejaVu Sans", sans-serif; }
.n2 { font: bold 8px/8px "DejaVu Sans", sans-serif; }
.taskbar > .arr { margin: 0 14px 0 4px; }
.tray { width: 57px; height: 30px; display: flex; align-items: center; gap: 6px; border-left: 1px solid #0a4cb0; background: linear-gradient(#18a0ec 0, #18b8f4 8%, #1290e8 20%, #1490ea 88%, #0c60b8 100%); }
.tray button { margin-left: -9px; }
```
